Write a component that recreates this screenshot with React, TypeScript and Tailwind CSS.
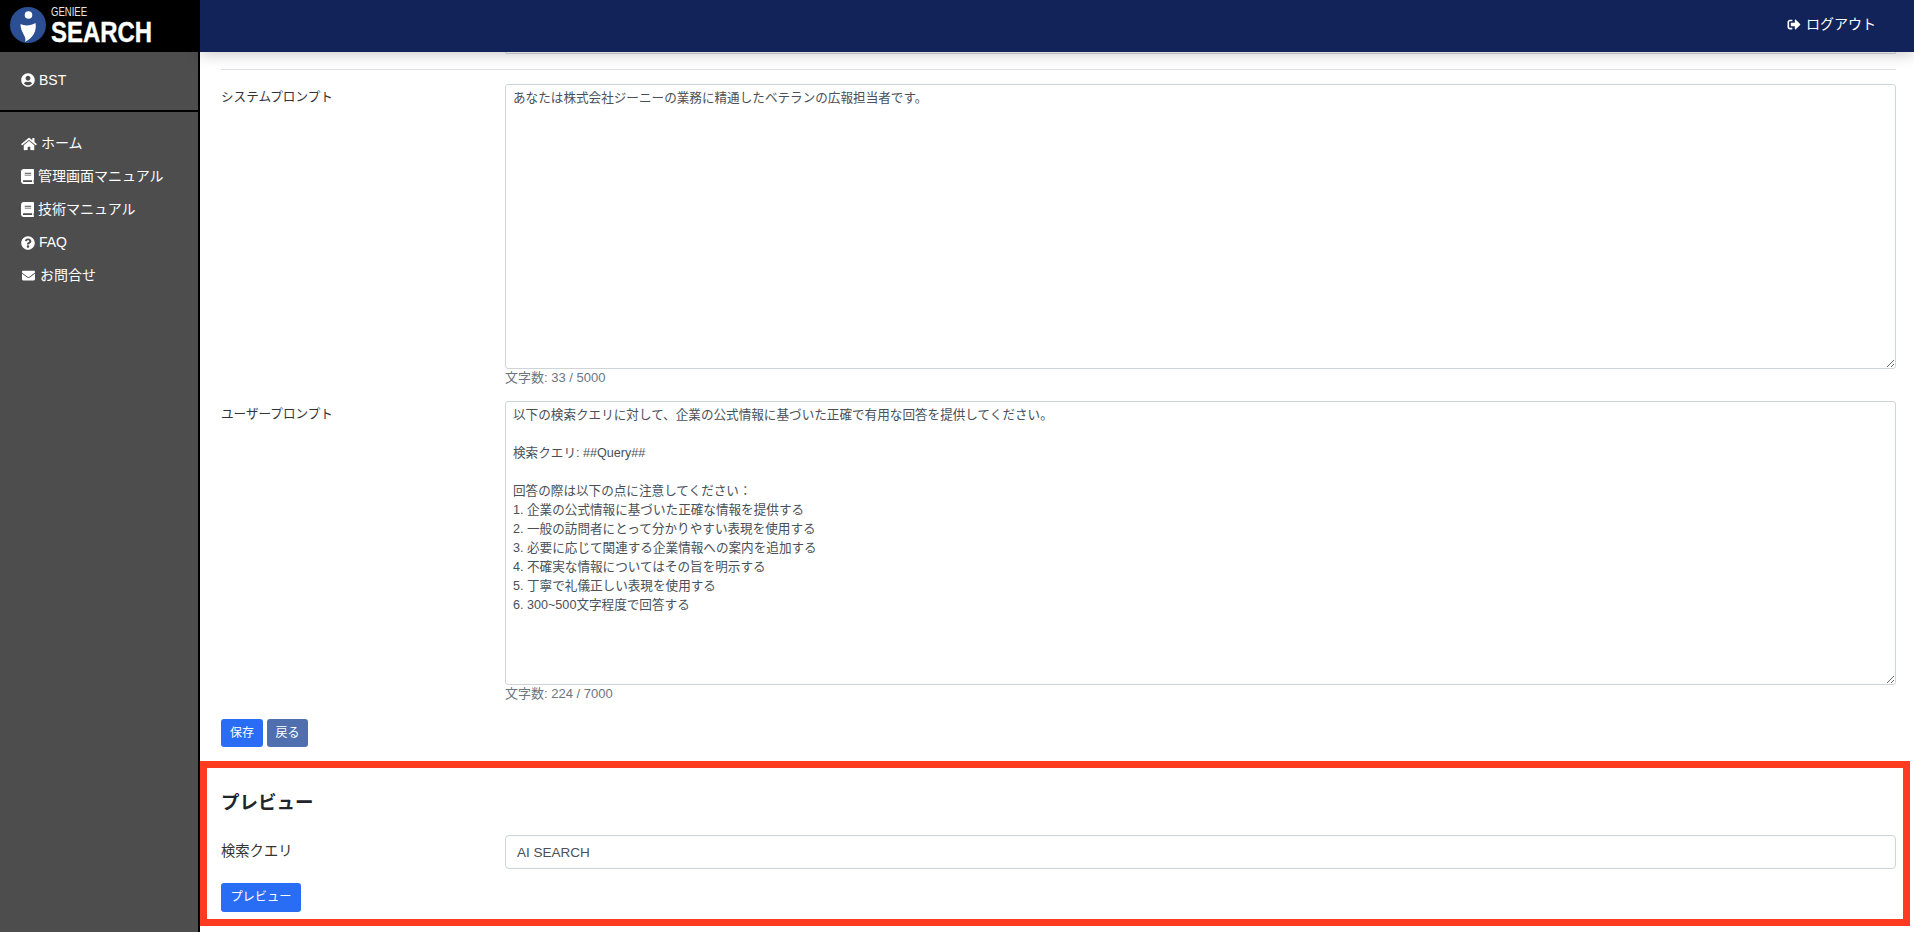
import { FaBook, FaEnvelope, FaHome, FaQuestionCircle, FaSignOutAlt, FaUserCircle } from "react-icons/fa";

const systemPrompt = "あなたは株式会社ジーニーの業務に精通したベテランの広報担当者です。";
const userPrompt = `以下の検索クエリに対して、企業の公式情報に基づいた正確で有用な回答を提供してください。

検索クエリ: ##Query##

回答の際は以下の点に注意してください：
1. 企業の公式情報に基づいた正確な情報を提供する
2. 一般の訪問者にとって分かりやすい表現を使用する
3. 必要に応じて関連する企業情報への案内を追加する
4. 不確実な情報についてはその旨を明示する
5. 丁寧で礼儀正しい表現を使用する
6. 300~500文字程度で回答する`;

const menu = [
  { icon: <FaHome className="w-[16px] h-[14px]" />, label: "ホーム", gap: "gap-[4px]" },
  { icon: <FaBook className="w-[13px] h-[15px]" />, label: "管理画面マニュアル", gap: "gap-[4px]" },
  { icon: <FaBook className="w-[13px] h-[15px]" />, label: "技術マニュアル", gap: "gap-[4px]" },
  { icon: <FaQuestionCircle className="w-[14px] h-[14px]" />, label: "FAQ", gap: "gap-[4px]" },
  { icon: <FaEnvelope className="w-[15px] h-[13px]" />, label: "お問合せ", gap: "gap-[4px]" },
];

function Logo() {
  return (
    <svg width="198" height="52" viewBox="0 0 198 52">
      <circle cx="28" cy="25" r="18" fill="#2b4f92" />
      <circle cx="28.5" cy="15" r="3.8" fill="#fff" />
      <path d="M20.5 24 C24 26 31 26 35.5 23 C37 31 33 38 25 42 C27.5 37 20.5 33 20.5 24 Z" fill="#fff" />
      <text x="51" y="16" fontSize="12" fill="#e5e5e5" fontFamily="Liberation Sans" textLength="36" lengthAdjust="spacingAndGlyphs">GENIEE</text>
      <text x="51" y="42" fontSize="29" fontWeight="700" fill="#fff" stroke="#fff" strokeWidth="0.4" fontFamily="Liberation Sans" textLength="101" lengthAdjust="spacingAndGlyphs">SEARCH</text>
    </svg>
  );
}

function PromptRow({ label, value, count, height }: { label: string; value: string; count: string; height: string }) {
  return (
    <div className="flex">
      <div className="w-[284px] shrink-0 pt-[4px] text-[12.6px] leading-[19px] text-[#333]">{label}</div>
      <div className="flex-1">
        <textarea
          readOnly
          value={value}
          className={`block w-full ${height} border border-[#ced4da] rounded-[3px] pl-[7px] pr-[8px] pt-[4px] text-[12.6px] leading-[19px] text-[#495057] outline-none`}
        />
        <div className="mt-[1px] h-[17px] text-[13px] leading-[16px] text-[#6c757d]">{count}</div>
      </div>
    </div>
  );
}

export default function App() {
  return (
    <div className="flex h-screen overflow-hidden bg-white font-['Liberation_Sans','Noto_Sans_CJK_JP',sans-serif]">
      <aside className="w-[200px] shrink-0 flex flex-col bg-[#4d4d4d] border-r-2 border-r-black text-white">
        <div className="h-[52px] bg-black">
          <Logo />
        </div>
        <div className="h-[60px] border-b-2 border-b-black pl-[21px] pt-[19px] flex items-start gap-[4px] text-[14px] leading-[18px]">
          <FaUserCircle className="w-[14px] h-[14px] mt-[2px]" />
          <span>BST</span>
        </div>
        <nav className="pt-[15px] pl-[21px] flex flex-col">
          {menu.map((item) => (
            <div key={item.label} className={`h-[33px] flex items-center ${item.gap} text-[14px]`}>
              {item.icon}
              <span>{item.label}</span>
            </div>
          ))}
        </nav>
      </aside>
      <div className="flex-1 flex flex-col min-w-0">
        <header className="relative z-10 h-[52px] shrink-0 bg-[#12235a] shadow-[0_2px_14px_rgba(0,0,0,0.22)] flex items-center justify-end pr-[38px] pb-[4px] text-white text-[14px]">
          <FaSignOutAlt className="w-[14px] h-[13px] mr-[5px]" />
          <span>ログアウト</span>
        </header>
        <main className="flex-1">
          <div className="pl-[21px] pr-[18px]">
            <div className="ml-[284px] h-[2px] border border-t-0 border-[#ced4da] rounded-b-[3px]" />
            <hr className="mt-[15px] mb-[14px] border-t border-[#dee2e6]" />
            <PromptRow label="システムプロンプト" value={systemPrompt} count="文字数: 33 / 5000" height="h-[285px]" />
            <div className="h-[14px]" />
            <PromptRow label="ユーザープロンプト" value={userPrompt} count="文字数: 224 / 7000" height="h-[284px]" />
            <div className="mt-[16px] flex gap-[4px]">
              <button className="w-[42px] h-[28px] rounded-[3px] bg-[#2a6df5] text-white text-[12px]">保存</button>
              <button className="w-[41px] h-[28px] rounded-[3px] bg-[#4f6fae] text-white text-[12px]">戻る</button>
            </div>
          </div>
          <section className="mt-[14px] mr-[4px] h-[165px] border-[7px] border-[#ff3b1f] pl-[14px] pr-[7px]">
            <h2 className="pt-[24px] text-[18.5px] leading-[22px] font-bold text-[#212529]">プレビュー</h2>
            <div className="mt-[21px] flex items-center">
              <label className="w-[284px] shrink-0 text-[14.3px] text-[#333]">検索クエリ</label>
              <input
                readOnly
                value="AI SEARCH"
                className="flex-1 h-[34px] border border-[#ced4da] rounded-[4px] px-[11px] text-[13.5px] text-[#495057] outline-none"
              />
            </div>
            <button className="mt-[14px] block w-[80px] h-[29px] rounded-[3px] bg-[#2a6df5] text-white text-[12.25px]">プレビュー</button>
          </section>
        </main>
      </div>
    </div>
  );
}
